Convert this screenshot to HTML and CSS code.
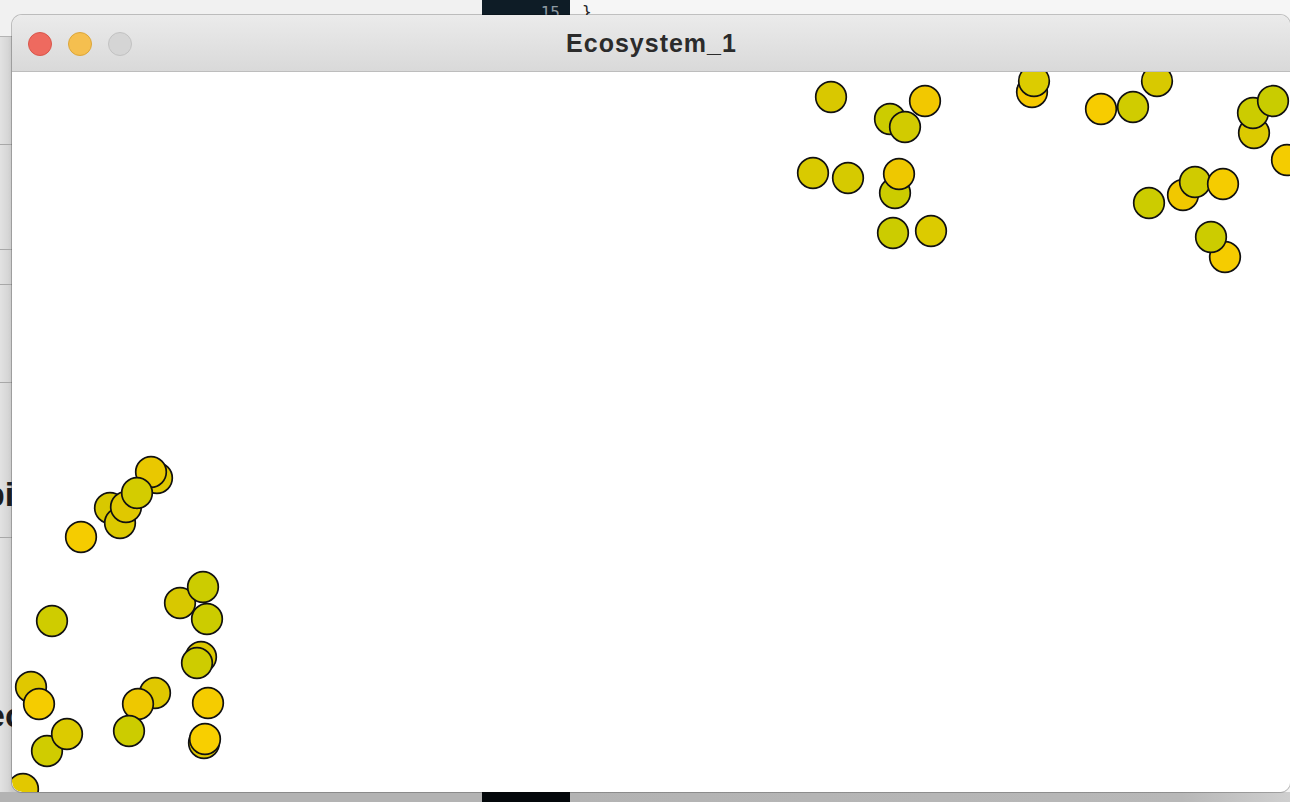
FILE: index.html
```html
<!DOCTYPE html>
<html>
<head>
<meta charset="utf-8">
<title>Ecosystem_1</title>
<link rel="stylesheet" href="styles.css">
</head>
<body>
<div class="desktop">
  <div class="backdrop">
    <aside class="sidebar">
      <div class="side-row top-row"></div>
      <div class="side-row r1"></div>
      <div class="side-row r2"></div>
      <div class="side-row r3"></div>
      <div class="side-row r4"></div>
      <div class="side-row r5"><span class="side-text pi">pixel</span></div>
      <div class="side-row r6"><span class="side-text ec">ecosystem</span></div>
      <div class="foot"></div>
    </aside>
    <div class="gutter">
      <div class="line-no">15</div>
      <div class="foot dark"></div>
    </div>
    <div class="editor">
      <div class="code-line">}</div>
      <div class="foot"></div>
    </div>
  </div>

  <div class="window">
    <div class="titlebar">
      <div class="lights">
        <span class="light close"></span>
        <span class="light minimize"></span>
        <span class="light zoom"></span>
      </div>
      <div class="title">Ecosystem_1</div>
    </div>
    <div class="canvas">
      <svg class="sketch" width="1278" height="720" viewBox="0 0 1278 720">
        <g transform="translate(-12,-72)" stroke="#111" stroke-width="1.7">
          <!-- top right cluster -->
          <circle cx="831" cy="97" r="15.3" fill="#d9c800"/>
          <circle cx="890" cy="119" r="15.3" fill="#cccc00"/>
          <circle cx="925" cy="101" r="15.3" fill="#f2c800"/>
          <circle cx="905" cy="127" r="15.3" fill="#d2cb00"/>
          <circle cx="1032" cy="92" r="15.3" fill="#f5c800"/>
          <circle cx="1034" cy="81" r="15.3" fill="#dccc00"/>
          <circle cx="1101" cy="109" r="15.3" fill="#f7cc00"/>
          <circle cx="1133" cy="107" r="15.3" fill="#d0cc00"/>
          <circle cx="1157" cy="81" r="15.3" fill="#d8c900"/>
          <circle cx="1254" cy="133" r="15.3" fill="#dcca00"/>
          <circle cx="1253" cy="113" r="15.3" fill="#cccc00"/>
          <circle cx="1273" cy="101" r="15.3" fill="#c9cc00"/>
          <circle cx="1287" cy="160" r="15.3" fill="#f4cc00"/>
          <circle cx="813" cy="173" r="15.3" fill="#d9ca00"/>
          <circle cx="848" cy="178" r="15.3" fill="#d6ca00"/>
          <circle cx="895" cy="193" r="15.3" fill="#cccc00"/>
          <circle cx="899" cy="174" r="15.3" fill="#eec800"/>
          <circle cx="893" cy="233" r="15.3" fill="#cccc00"/>
          <circle cx="931" cy="231" r="15.3" fill="#dccb00"/>
          <circle cx="1149" cy="203" r="15.3" fill="#cccc00"/>
          <circle cx="1183" cy="195" r="15.3" fill="#f1c800"/>
          <circle cx="1195" cy="182" r="15.3" fill="#d0cb00"/>
          <circle cx="1223" cy="184" r="15.3" fill="#f5cc00"/>
          <circle cx="1225" cy="257" r="15.3" fill="#f5cc00"/>
          <circle cx="1211" cy="237" r="15.3" fill="#cccc00"/>
          <!-- bottom left cluster -->
          <circle cx="157" cy="478" r="15.3" fill="#e0c800"/>
          <circle cx="151" cy="472" r="15.3" fill="#e9c800"/>
          <circle cx="110" cy="508" r="15.3" fill="#d8c800"/>
          <circle cx="120" cy="523" r="15.3" fill="#dcc900"/>
          <circle cx="126" cy="507" r="15.3" fill="#e0c800"/>
          <circle cx="137" cy="493" r="15.3" fill="#d4cc00"/>
          <circle cx="81" cy="537" r="15.3" fill="#f5cc00"/>
          <circle cx="180" cy="603" r="15.3" fill="#d8c800"/>
          <circle cx="203" cy="587" r="15.3" fill="#cccc00"/>
          <circle cx="207" cy="619" r="15.3" fill="#cccc00"/>
          <circle cx="52" cy="621" r="15.3" fill="#cfcc00"/>
          <circle cx="201" cy="657" r="15.3" fill="#dcc900"/>
          <circle cx="197" cy="663" r="15.3" fill="#cecc00"/>
          <circle cx="208" cy="703" r="15.3" fill="#f5cc00"/>
          <circle cx="204" cy="743" r="15.3" fill="#e0c800"/>
          <circle cx="205" cy="739" r="15.3" fill="#f8cf00"/>
          <circle cx="31" cy="687" r="15.3" fill="#e0c800"/>
          <circle cx="39" cy="704" r="15.3" fill="#f5cc00"/>
          <circle cx="47" cy="751" r="15.3" fill="#d0cc00"/>
          <circle cx="67" cy="734" r="15.3" fill="#dccb00"/>
          <circle cx="155" cy="693" r="15.3" fill="#e0c800"/>
          <circle cx="138" cy="704" r="15.3" fill="#eec800"/>
          <circle cx="129" cy="731" r="15.3" fill="#cccc00"/>
          <circle cx="23" cy="789" r="15.3" fill="#e2c800"/>
        </g>
      </svg>
    </div>
  </div>
</div>
</body>
</html>
```

FILE: styles.css
```css
* { box-sizing: border-box; }

html, body {
  margin: 0;
  padding: 0;
}

body {
  width: 1290px;
  height: 802px;
  overflow: hidden;
  font-family: "Liberation Sans", Arial, sans-serif;
  background: #e6e6e6;
}

.desktop {
  position: relative;
  width: 1290px;
  height: 802px;
  overflow: hidden;
}

.backdrop {
  display: grid;
  grid-template-columns: 482px 88px 1fr;
  height: 802px;
}

/* left sidebar behind the window */
.sidebar {
  display: flex;
  flex-direction: column;
  background: linear-gradient(to right, #e2e2e2 0px, #d6d6d6 8px, #c9c9c9 12px);
}

.side-row {
  border-bottom: 1px solid #a8a8a8;
  display: flex;
  align-items: flex-end;
  overflow: hidden;
}

.top-row { height: 37px; background: #f1f1f1; border-bottom-color: #b4b4b4; }
.r1 { height: 108px; }
.r2 { height: 105px; }
.r3 { height: 35px; }
.r4 { height: 98px; }
.r5 { height: 155px; padding-bottom: 26px; }
.r6 { flex: 1; border-bottom: none; padding-bottom: 60px; }

.side-text {
  font-family: "Liberation Sans", Arial, sans-serif;
  font-weight: 700;
  font-size: 34px;
  line-height: 1;
  color: #1d1d1f;
  white-space: nowrap;
}

.side-text.pi { margin-left: -16px; }
.side-text.ec { margin-left: -14px; }

.foot {
  height: 10px;
  background: #b3b3b3;
  flex: none;
}

.foot.dark { background: #04080b; }

/* code editor gutter */
.gutter {
  display: flex;
  flex-direction: column;
  background: #0e1c26;
}

.line-no {
  flex: 1;
  padding: 3px 10px 0 0;
  text-align: right;
  font-family: "DejaVu Sans Mono", monospace;
  font-size: 16px;
  line-height: 20px;
  color: #8d9aa3;
}

.editor {
  display: flex;
  flex-direction: column;
  background: #f6f6f6;
}

.code-line {
  flex: 1;
  padding: 2px 0 0 12px;
  font-family: "DejaVu Sans Mono", monospace;
  font-size: 16px;
  line-height: 20px;
  color: #222;
}

.editor .foot {
  background: linear-gradient(to right, #b3b3b3 0%, #b8b8b8 85%, #cfcfcf 100%);
}

/* the application window */
.window {
  position: absolute;
  left: 12px;
  top: 15px;
  width: 1278px;
  height: 777px;
  border-radius: 10px;
  background: #fff;
  box-shadow: 0 0 0 1px rgba(0, 0, 0, 0.22);
  display: flex;
  flex-direction: column;
  overflow: hidden;
}

.titlebar {
  position: relative;
  height: 57px;
  flex: none;
  display: flex;
  align-items: center;
  justify-content: center;
  background: linear-gradient(to bottom, #ebebeb, #d9d9d9);
  border-bottom: 1px solid #bdbdbd;
}

.lights {
  position: absolute;
  left: 16px;
  top: 17px;
  display: flex;
  gap: 16px;
}

.light {
  width: 24px;
  height: 24px;
  border-radius: 50%;
  display: block;
}

.light.close { background: #ee6a5f; border: 1px solid #d9564b; }
.light.minimize { background: #f5bf4f; border: 1px solid #dca63a; }
.light.zoom { background: #d5d5d5; border: 1px solid #c2c2c2; }

.title {
  font-family: "Liberation Sans", Arial, sans-serif;
  font-weight: 700;
  font-size: 25px;
  letter-spacing: 1px;
  color: #2b2b2b;
  margin-left: 1px;
}

.canvas {
  flex: 1;
  position: relative;
  overflow: hidden;
  background: #fff;
  border-bottom-left-radius: 10px;
  border-bottom-right-radius: 10px;
}

.sketch {
  display: block;
}
```
